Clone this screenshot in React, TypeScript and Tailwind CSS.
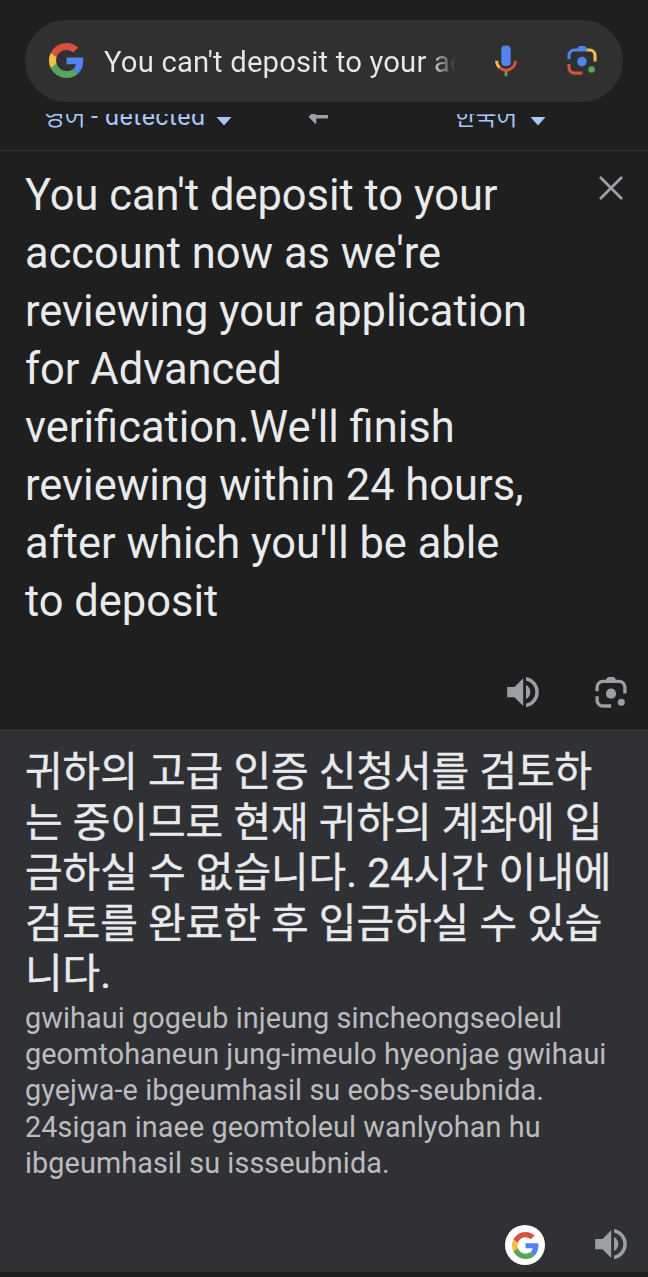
const sourceLines = [
  "You can't deposit to your",
  "account now as we're",
  "reviewing your application",
  "for Advanced",
  "verification.We'll finish",
  "reviewing within 24 hours,",
  "after which you'll be able",
  "to deposit",
];

const translatedLines = [
  "귀하의 고급 인증 신청서를 검토하",
  "는 중이므로 현재 귀하의 계좌에 입",
  "금하실 수 없습니다. 24시간 이내에",
  "검토를 완료한 후 입금하실 수 있습",
  "니다.",
];

const romanizedLines = [
  "gwihaui gogeub injeung sincheongseoleul",
  "geomtohaneun jung-imeulo hyeonjae gwihaui",
  "gyejwa-e ibgeumhasil su eobs-seubnida.",
  "24sigan inaee geomtoleul wanlyohan hu",
  "ibgeumhasil su issseubnida.",
];

function GoogleLogo({ className }: { className?: string }) {
  return (
    <svg viewBox="0 0 48 48" className={className}>
      <path fill="#d95040" d="M24 9.5c3.54 0 6.71 1.22 9.21 3.6l6.85-6.85C35.9 2.38 30.47 0 24 0 14.62 0 6.51 5.38 2.56 13.22l7.98 6.19C12.43 13.72 17.74 9.5 24 9.5z" />
      <path fill="#5383ec" d="M46.98 24.55c0-1.57-.15-3.09-.38-4.55H24v9.02h12.94c-.58 2.96-2.26 5.48-4.78 7.18l7.73 6c4.51-4.18 7.09-10.36 7.09-17.65z" />
      <path fill="#f2bf42" d="M10.53 28.59c-.48-1.45-.76-2.99-.76-4.59s.27-3.14.76-4.59l-7.98-6.19C.92 16.46 0 20.12 0 24c0 3.88.92 7.54 2.56 10.78l7.97-6.19z" />
      <path fill="#58a55c" d="M24 48c6.48 0 11.93-2.13 15.89-5.81l-7.73-6c-2.15 1.45-4.92 2.3-8.16 2.3-6.26 0-11.57-4.22-13.47-9.91l-7.98 6.19C6.51 42.62 14.62 48 24 48z" />
    </svg>
  );
}

function MicIcon() {
  return (
    <svg viewBox="0 0 22 32" className="h-8 w-[22px]">
      <rect x="6.3" y="0.5" width="9.4" height="20.5" rx="4" fill="#5383ec" />
      <path d="M9.6 26h2.8v5.3H9.6z" fill="#58a55c" />
      <path d="M1.6 15.7a9.4 9.4 0 0 0 3.1 7" fill="none" stroke="#f2bf42" strokeWidth="2.9" />
      <path d="M4.4 22.4A9.4 9.4 0 0 0 20.4 15.7" fill="none" stroke="#d95040" strokeWidth="2.9" />
    </svg>
  );
}

function LensIcon({ mono, className }: { mono?: boolean; className?: string }) {
  const blue = mono ? "#9aa0a6" : "#5383ec";
  const yellow = mono ? "#9aa0a6" : "#f2bf42";
  const red = mono ? "#9aa0a6" : "#d95040";
  const green = mono ? "#9aa0a6" : "#58a55c";
  return (
    <svg viewBox="0 0 32 32" className={className}>
      <g fill="none" strokeWidth="3.3">
        <path d="M2.1 15.2v-4a5.8 5.8 0 0 1 5.8-5.8h13" stroke={blue} />
        <path d="M20.7 5.4h3.4a5.8 5.8 0 0 1 5.8 5.8v6.3" stroke={yellow} />
        <path d="M2.1 20.2v4a5.8 5.8 0 0 0 5.8 5.8h8.3" stroke={red} />
      </g>
      <path d="M10 5.5 12.1 1.9Q12.7 1 13.7 1h4.6q1 0 1.6.9L22 5.5z" fill={blue} />
      <circle cx="16" cy="17.7" r="5.1" fill={blue} />
      <circle cx="26.3" cy="26.2" r="3.5" fill={green} />
    </svg>
  );
}

function SpeakerIcon() {
  return (
    <svg viewBox="0 0 32 32" className="h-8 w-8" fill="#9aa0a6">
      <path d="M0.2 11v10.3h7.3L16.2 30V2.2L7.5 11z" />
      <path d="M19 9v14.2a8 8 0 0 0 0-14.2z" />
      <path d="M19 1v3.4a12 12 0 0 1 0 23.4v3.4A15.3 15.3 0 0 0 19 1z" />
    </svg>
  );
}

function Caret() {
  return (
    <svg viewBox="0 0 16 9" className="h-[9px] w-4" fill="#a8c7fa">
      <path d="M.5 0h15L8 8.5z" />
    </svg>
  );
}

export default function App() {
  return (
    <div className="h-[1277px] w-[648px] overflow-hidden bg-[#1f1f1f] pt-5 font-['Roboto','Noto_Sans_CJK_KR',sans-serif] text-[#e8eaed]">
      <header className="mx-[25px] flex h-[82px] items-center rounded-full bg-[#303030] pl-6">
        <GoogleLogo className="-mt-0.5 h-[35px] w-[35px] shrink-0" />
        <div className="mt-px ml-5 w-[352px] overflow-hidden whitespace-nowrap bg-linear-to-r from-[#e8e8e8] from-93% to-[#303030] bg-clip-text text-[29.3px] leading-10 tracking-[0.15px] text-transparent">
          You can't deposit to your ac
        </div>
        <div className="ml-[39px]">
          <MicIcon />
        </div>
        <LensIcon className="-mt-0.5 ml-[50px] h-[30px] w-[30px]" />
      </header>

      <div className="mt-3 flex h-[37px] items-start overflow-hidden border-b border-[#36373a] pl-11 text-[22.5px] leading-8 text-[#a8c7fa]">
        <div className="-mt-[13px] w-[172px] whitespace-nowrap">
          영어 <span className="text-[25px] tracking-[0.4px]">- detected</span>
        </div>
        <div className="mt-[3px]">
          <Caret />
        </div>
        <svg viewBox="0 0 20 16" className="-mt-[5px] ml-[76px] h-4 w-5" fill="#9aa0a6">
          <path d="M.5 7.8 7.8.5V6H20v3.4H8.3v5.3H7.2z" />
        </svg>
        <div className="-mt-[13px] ml-[127px] w-[75px] whitespace-nowrap">한국어</div>
        <div className="mt-[3px]">
          <Caret />
        </div>
      </div>

      <section className="h-[578px] pl-[25px]">
        <div className="flex h-[480px] justify-between pt-4">
          <div className="text-[43.45px] leading-[58px]">
            {sourceLines.map((line) => (
              <div key={line} className="whitespace-nowrap">{line}</div>
            ))}
          </div>
          <svg viewBox="0 0 24 24" className="mt-[9px] mr-[25px] h-6 w-6" stroke="#9aa0a6" strokeWidth="2.8">
            <path d="M1 1l22 22M23 1 1 23" />
          </svg>
        </div>
        <div className="flex items-center justify-end gap-14 pt-[45px] pr-[21px]">
          <SpeakerIcon />
          <LensIcon mono className="h-8 w-8" />
        </div>
      </section>

      <section className="h-[543px] bg-[#303134] pt-[18px] pl-[25px]">
        <div className="h-[253px] text-[40.9px] leading-[50.6px] [-webkit-text-stroke:0.4px_#e8eaed]">
          {translatedLines.map((line) => (
            <div key={line} className="whitespace-nowrap">{line}</div>
          ))}
        </div>
        <div className="h-[225px] text-[28.8px] leading-[36.2px] tracking-[0.08px] text-[#bcbcbe]">
          {romanizedLines.map((line) => (
            <div key={line} className="whitespace-nowrap">{line}</div>
          ))}
        </div>
        <div className="flex items-center justify-end pr-[21px]">
          <div className="mr-[50px] flex h-10 w-10 items-center justify-center rounded-full bg-white">
            <GoogleLogo className="h-[27px] w-[27px]" />
          </div>
          <div className="mb-0.5">
            <SpeakerIcon />
          </div>
        </div>
      </section>
    </div>
  );
}
